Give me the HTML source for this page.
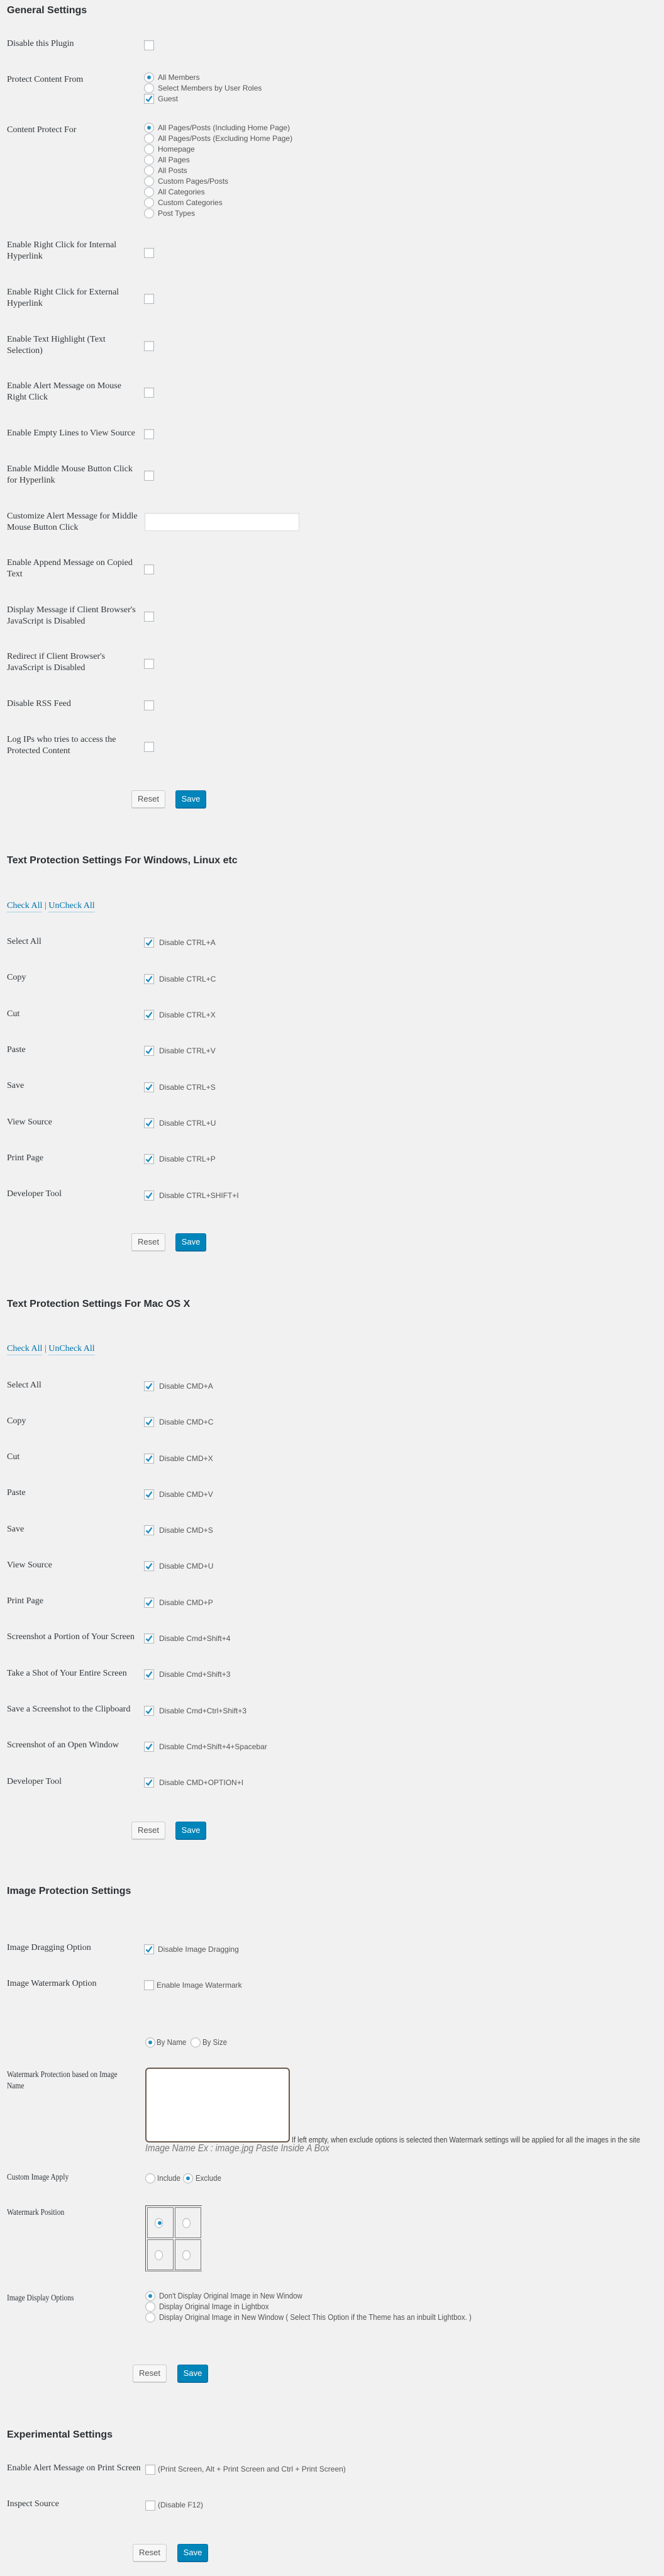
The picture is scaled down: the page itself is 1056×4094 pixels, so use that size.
<!DOCTYPE html>
<html><head><meta charset="utf-8">
<style>
html,body{margin:0;padding:0;background:#f1f1f1;}
body{position:relative;width:1056px;height:4094px;overflow:hidden;}
.h{position:absolute;left:11px;font:bold 16px/20px "Liberation Sans",sans-serif;color:#2b2f33;}
.l{position:absolute;left:11px;font:14px/18px "Liberation Serif",serif;color:#32373c;white-space:nowrap;}
.cb,.r{position:absolute;left:229px;width:14px;height:14px;border:1px solid #b4b9be;background:#fff;box-shadow:inset 0 1px 2px rgba(0,0,0,.08);}
.r{border-radius:50%;}
.r.on::after{content:"";position:absolute;left:4px;top:4px;width:6px;height:6px;border-radius:50%;background:#1e8cbe;}
.cb svg{position:absolute;left:0;top:0;}
.t{position:absolute;left:253px;font:12px/16px "Liberation Sans",sans-serif;color:#555;white-space:nowrap;}
.btn{position:absolute;height:26px;border-radius:3px;font:13px/26px "Liberation Sans",sans-serif;text-align:center;}
.rs{width:52px;background:#f7f7f7;border:1px solid #ccc;color:#555;box-shadow:0 1px 0 #ccc;}
.sv{width:47px;background:#0085ba;border:1px solid #0073aa;color:#fff;box-shadow:0 1px 0 #006799;}
.ca{position:absolute;left:11px;font:14px/18px "Liberation Serif",serif;color:#0073aa;}
.ca span{border-bottom:1px solid #a8cfe3;padding-bottom:2px;}
.ca b{font-weight:normal;color:#555;}
.cd{transform:scaleX(.82);transform-origin:0 50%;}
.ct{transform:scaleX(.92);transform-origin:0 50%;font-size:12.5px;}
</style></head><body>

<div class="h" style="top:7px">General Settings</div>

<div class="l" style="top:61px">Disable this Plugin</div>
<div class="cb" style="top:64px"></div>

<div class="l" style="top:118px">Protect Content From</div>
<div class="r on" style="top:115px"></div><div class="t" style="left:251px;top:115px">All Members</div>
<div class="r" style="top:132px"></div><div class="t" style="left:251px;top:132px">Select Members by User Roles</div>
<div class="cb" style="top:149px"><svg width="14" height="14"><path d="M2.5 7.5l3.2 3.2 5.8-8" stroke="#1e8cbe" stroke-width="2.3" fill="none"/></svg></div><div class="t" style="left:251px;top:149px">Guest</div>

<div class="l" style="top:198px">Content Protect For</div>
<div class="r on" style="top:195px"></div><div class="t" style="left:251px;top:195px">All Pages/Posts (Including Home Page)</div>
<div class="r" style="top:212px"></div><div class="t" style="left:251px;top:212px">All Pages/Posts (Excluding Home Page)</div>
<div class="r" style="top:229px"></div><div class="t" style="left:251px;top:229px">Homepage</div>
<div class="r" style="top:246px"></div><div class="t" style="left:251px;top:246px">All Pages</div>
<div class="r" style="top:263px"></div><div class="t" style="left:251px;top:263px">All Posts</div>
<div class="r" style="top:280px"></div><div class="t" style="left:251px;top:280px">Custom Pages/Posts</div>
<div class="r" style="top:297px"></div><div class="t" style="left:251px;top:297px">All Categories</div>
<div class="r" style="top:314px"></div><div class="t" style="left:251px;top:314px">Custom Categories</div>
<div class="r" style="top:331px"></div><div class="t" style="left:251px;top:331px">Post Types</div>

<div class="l" style="top:381px">Enable Right Click for Internal<br>Hyperlink</div><div class="cb" style="top:394px"></div>
<div class="l" style="top:456px">Enable Right Click for External<br>Hyperlink</div><div class="cb" style="top:467px"></div>
<div class="l" style="top:531px">Enable Text Highlight (Text<br>Selection)</div><div class="cb" style="top:542px"></div>
<div class="l" style="top:605px">Enable Alert Message on Mouse<br>Right Click</div><div class="cb" style="top:616px"></div>
<div class="l" style="top:680px">Enable Empty Lines to View Source</div><div class="cb" style="top:682px"></div>
<div class="l" style="top:737px">Enable Middle Mouse Button Click<br>for Hyperlink</div><div class="cb" style="top:748px"></div>
<div class="l" style="top:812px">Customize Alert Message for Middle<br>Mouse Button Click</div>
<div style="position:absolute;left:230px;top:815px;width:244px;height:27px;background:#fff;border:1px solid #ddd;box-shadow:inset 0 1px 2px rgba(0,0,0,.07)"></div>
<div class="l" style="top:886px">Enable Append Message on Copied<br>Text</div><div class="cb" style="top:897px"></div>
<div class="l" style="top:961px">Display Message if Client Browser's<br>JavaScript is Disabled</div><div class="cb" style="top:972px"></div>
<div class="l" style="top:1035px">Redirect if Client Browser's<br>JavaScript is Disabled</div><div class="cb" style="top:1047px"></div>
<div class="l" style="top:1110px">Disable RSS Feed</div><div class="cb" style="top:1113px"></div>
<div class="l" style="top:1167px">Log IPs who tries to access the<br>Protected Content</div><div class="cb" style="top:1179px"></div>

<div class="btn rs" style="left:209px;top:1256px">Reset</div>
<div class="btn sv" style="left:279px;top:1256px">Save</div>

<div class="h" style="top:1358px">Text Protection Settings For Windows, Linux etc</div>
<div class="ca" style="top:1431px"><span>Check All</span> <b>|</b> <span>UnCheck All</span></div>

<div class="l" style="top:1488px">Select All</div><div class="cb" style="top:1490px"><svg width="14" height="14"><path d="M2.5 7.5l3.2 3.2 5.8-8" stroke="#1e8cbe" stroke-width="2.3" fill="none"/></svg></div><div class="t" style="top:1490px">Disable CTRL+A</div>
<div class="l" style="top:1545px">Copy</div><div class="cb" style="top:1548px"><svg width="14" height="14"><path d="M2.5 7.5l3.2 3.2 5.8-8" stroke="#1e8cbe" stroke-width="2.3" fill="none"/></svg></div><div class="t" style="top:1548px">Disable CTRL+C</div>
<div class="l" style="top:1603px">Cut</div><div class="cb" style="top:1605px"><svg width="14" height="14"><path d="M2.5 7.5l3.2 3.2 5.8-8" stroke="#1e8cbe" stroke-width="2.3" fill="none"/></svg></div><div class="t" style="top:1605px">Disable CTRL+X</div>
<div class="l" style="top:1660px">Paste</div><div class="cb" style="top:1662px"><svg width="14" height="14"><path d="M2.5 7.5l3.2 3.2 5.8-8" stroke="#1e8cbe" stroke-width="2.3" fill="none"/></svg></div><div class="t" style="top:1662px">Disable CTRL+V</div>
<div class="l" style="top:1717px">Save</div><div class="cb" style="top:1720px"><svg width="14" height="14"><path d="M2.5 7.5l3.2 3.2 5.8-8" stroke="#1e8cbe" stroke-width="2.3" fill="none"/></svg></div><div class="t" style="top:1720px">Disable CTRL+S</div>
<div class="l" style="top:1775px">View Source</div><div class="cb" style="top:1777px"><svg width="14" height="14"><path d="M2.5 7.5l3.2 3.2 5.8-8" stroke="#1e8cbe" stroke-width="2.3" fill="none"/></svg></div><div class="t" style="top:1777px">Disable CTRL+U</div>
<div class="l" style="top:1832px">Print Page</div><div class="cb" style="top:1834px"><svg width="14" height="14"><path d="M2.5 7.5l3.2 3.2 5.8-8" stroke="#1e8cbe" stroke-width="2.3" fill="none"/></svg></div><div class="t" style="top:1834px">Disable CTRL+P</div>
<div class="l" style="top:1889px">Developer Tool</div><div class="cb" style="top:1892px"><svg width="14" height="14"><path d="M2.5 7.5l3.2 3.2 5.8-8" stroke="#1e8cbe" stroke-width="2.3" fill="none"/></svg></div><div class="t" style="top:1892px">Disable CTRL+SHIFT+I</div>

<div class="btn rs" style="left:209px;top:1960px">Reset</div>
<div class="btn sv" style="left:279px;top:1960px">Save</div>

<div class="h" style="top:2063px">Text Protection Settings For Mac OS X</div>
<div class="ca" style="top:2135px"><span>Check All</span> <b>|</b> <span>UnCheck All</span></div>

<div class="l" style="top:2193px">Select All</div><div class="cb" style="top:2195px"><svg width="14" height="14"><path d="M2.5 7.5l3.2 3.2 5.8-8" stroke="#1e8cbe" stroke-width="2.3" fill="none"/></svg></div><div class="t" style="top:2195px">Disable CMD+A</div>
<div class="l" style="top:2250px">Copy</div><div class="cb" style="top:2252px"><svg width="14" height="14"><path d="M2.5 7.5l3.2 3.2 5.8-8" stroke="#1e8cbe" stroke-width="2.3" fill="none"/></svg></div><div class="t" style="top:2252px">Disable CMD+C</div>
<div class="l" style="top:2307px">Cut</div><div class="cb" style="top:2310px"><svg width="14" height="14"><path d="M2.5 7.5l3.2 3.2 5.8-8" stroke="#1e8cbe" stroke-width="2.3" fill="none"/></svg></div><div class="t" style="top:2310px">Disable CMD+X</div>
<div class="l" style="top:2364px">Paste</div><div class="cb" style="top:2367px"><svg width="14" height="14"><path d="M2.5 7.5l3.2 3.2 5.8-8" stroke="#1e8cbe" stroke-width="2.3" fill="none"/></svg></div><div class="t" style="top:2367px">Disable CMD+V</div>
<div class="l" style="top:2422px">Save</div><div class="cb" style="top:2424px"><svg width="14" height="14"><path d="M2.5 7.5l3.2 3.2 5.8-8" stroke="#1e8cbe" stroke-width="2.3" fill="none"/></svg></div><div class="t" style="top:2424px">Disable CMD+S</div>
<div class="l" style="top:2479px">View Source</div><div class="cb" style="top:2481px"><svg width="14" height="14"><path d="M2.5 7.5l3.2 3.2 5.8-8" stroke="#1e8cbe" stroke-width="2.3" fill="none"/></svg></div><div class="t" style="top:2481px">Disable CMD+U</div>
<div class="l" style="top:2536px">Print Page</div><div class="cb" style="top:2539px"><svg width="14" height="14"><path d="M2.5 7.5l3.2 3.2 5.8-8" stroke="#1e8cbe" stroke-width="2.3" fill="none"/></svg></div><div class="t" style="top:2539px">Disable CMD+P</div>
<div class="l" style="top:2593px">Screenshot a Portion of Your Screen</div><div class="cb" style="top:2596px"><svg width="14" height="14"><path d="M2.5 7.5l3.2 3.2 5.8-8" stroke="#1e8cbe" stroke-width="2.3" fill="none"/></svg></div><div class="t" style="top:2596px">Disable Cmd+Shift+4</div>
<div class="l" style="top:2651px">Take a Shot of Your Entire Screen</div><div class="cb" style="top:2653px"><svg width="14" height="14"><path d="M2.5 7.5l3.2 3.2 5.8-8" stroke="#1e8cbe" stroke-width="2.3" fill="none"/></svg></div><div class="t" style="top:2653px">Disable Cmd+Shift+3</div>
<div class="l" style="top:2708px">Save a Screenshot to the Clipboard</div><div class="cb" style="top:2711px"><svg width="14" height="14"><path d="M2.5 7.5l3.2 3.2 5.8-8" stroke="#1e8cbe" stroke-width="2.3" fill="none"/></svg></div><div class="t" style="top:2711px">Disable Cmd+Ctrl+Shift+3</div>
<div class="l" style="top:2765px">Screenshot of an Open Window</div><div class="cb" style="top:2768px"><svg width="14" height="14"><path d="M2.5 7.5l3.2 3.2 5.8-8" stroke="#1e8cbe" stroke-width="2.3" fill="none"/></svg></div><div class="t" style="top:2768px">Disable Cmd+Shift+4+Spacebar</div>
<div class="l" style="top:2823px">Developer Tool</div><div class="cb" style="top:2825px"><svg width="14" height="14"><path d="M2.5 7.5l3.2 3.2 5.8-8" stroke="#1e8cbe" stroke-width="2.3" fill="none"/></svg></div><div class="t" style="top:2825px">Disable CMD+OPTION+I</div>

<div class="btn rs" style="left:209px;top:2895px">Reset</div>
<div class="btn sv" style="left:279px;top:2895px">Save</div>

<div class="h" style="top:2996px">Image Protection Settings</div>
<div class="l" style="top:3087px">Image Dragging Option</div><div class="cb" style="top:3090px"><svg width="14" height="14"><path d="M2.5 7.5l3.2 3.2 5.8-8" stroke="#1e8cbe" stroke-width="2.3" fill="none"/></svg></div><div class="t" style="left:251px;top:3090px">Disable Image Dragging</div>
<div class="l" style="top:3144px">Image Watermark Option</div><div class="cb" style="top:3147px"></div><div class="t" style="left:249px;top:3147px">Enable Image Watermark</div>

<div class="r on" style="left:231px;top:3238px"></div><div class="t ct" style="left:249px;top:3238px">By Name</div>
<div class="r" style="left:303px;top:3238px"></div><div class="t ct" style="left:322px;top:3238px">By Size</div>

<div class="l cd" style="top:3289px">Watermark Protection based on Image<br>Name</div>
<div style="position:absolute;left:231px;top:3286px;width:226px;height:115px;background:#fff;border:2px solid #6b5a4c;border-radius:6px"></div>
<div class="t ct" style="left:464px;top:3393px;color:#444;transform:scaleX(.88)">If left empty, when exclude options is selected then Watermark settings will be applied for all the images in the site</div>
<div class="t" style="left:231px;top:3406px;font:italic 15.5px/18px 'Liberation Sans',sans-serif;color:#777;transform:scaleX(.9);transform-origin:0 50%">Image Name Ex : image.jpg Paste Inside A Box</div>

<div class="l cd" style="top:3452px">Custom Image Apply</div>
<div class="r" style="left:231px;top:3454px"></div><div class="t ct" style="left:250px;top:3454px">Include</div>
<div class="r on" style="left:291px;top:3454px"></div><div class="t ct" style="left:311px;top:3454px">Exclude</div>

<div class="l cd" style="top:3508px">Watermark Position</div>
<div style="position:absolute;left:231px;top:3505px;width:89px;height:103px;border-top:1px solid #555;border-left:1px solid #555;border-bottom:1px solid #888"></div>
<div style="position:absolute;left:234px;top:3508px;width:40px;height:47px;border:1px solid #777"></div>
<div style="position:absolute;left:278px;top:3508px;width:40px;height:47px;border:1px solid #777"></div>
<div style="position:absolute;left:234px;top:3559px;width:40px;height:47px;border:1px solid #777"></div>
<div style="position:absolute;left:278px;top:3559px;width:40px;height:47px;border:1px solid #777"></div>
<div class="r on" style="left:246px;top:3525px;width:11px"></div>
<div class="r" style="left:290px;top:3525px;width:11px"></div>
<div class="r" style="left:246px;top:3576px;width:11px"></div>
<div class="r" style="left:290px;top:3576px;width:11px"></div>

<div class="l cd" style="top:3644px">Image Display Options</div>
<div class="r on" style="left:231px;top:3641px"></div><div class="t ct" style="left:253px;top:3641px">Don't Display Original Image in New Window</div>
<div class="r" style="left:231px;top:3658px"></div><div class="t ct" style="left:253px;top:3658px">Display Original Image in Lightbox</div>
<div class="r" style="left:231px;top:3675px"></div><div class="t ct" style="left:253px;top:3675px">Display Original Image in New Window ( Select This Option if the Theme has an inbuilt Lightbox. )</div>

<div class="btn rs" style="left:211px;top:3758px">Reset</div>
<div class="btn sv" style="left:282px;top:3758px">Save</div>

<div class="h" style="top:3860px">Experimental Settings</div>
<div class="l" style="top:3914px">Enable Alert Message on Print Screen</div>
<div class="cb" style="left:231px;top:3917px"></div><div class="t" style="left:251px;top:3916px">(Print Screen, Alt + Print Screen and Ctrl + Print Screen)</div>
<div class="l" style="top:3971px">Inspect Source</div>
<div class="cb" style="left:231px;top:3974px"></div><div class="t" style="left:251px;top:3973px">(Disable F12)</div>

<div class="btn rs" style="left:211px;top:4043px">Reset</div>
<div class="btn sv" style="left:282px;top:4043px">Save</div>

</body></html>
